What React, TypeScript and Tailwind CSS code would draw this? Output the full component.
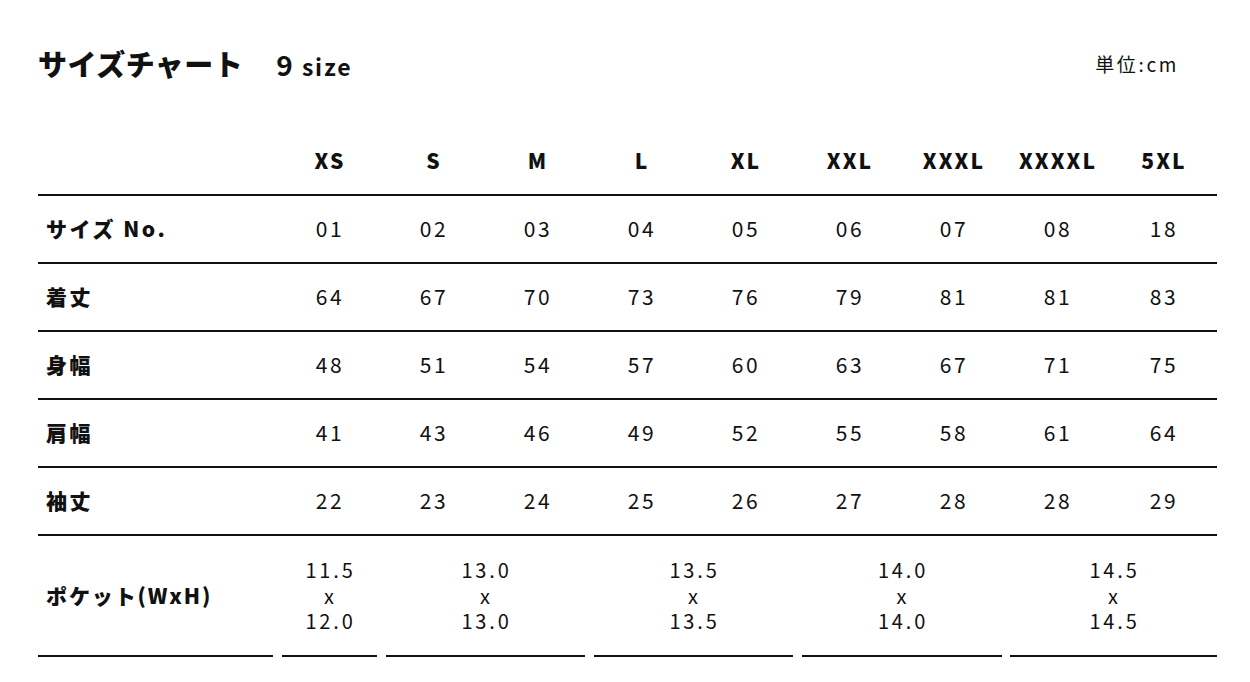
import React from "react";

const sizes = ["XS", "S", "M", "L", "XL", "XXL", "XXXL", "XXXXL", "5XL"];

const rows: { label: string; values: string[] }[] = [
  { label: "サイズ No.", values: ["01", "02", "03", "04", "05", "06", "07", "08", "18"] },
  { label: "着丈", values: ["64", "67", "70", "73", "76", "79", "81", "81", "83"] },
  { label: "身幅", values: ["48", "51", "54", "57", "60", "63", "67", "71", "75"] },
  { label: "肩幅", values: ["41", "43", "46", "49", "52", "55", "58", "61", "64"] },
  { label: "袖丈", values: ["22", "23", "24", "25", "26", "27", "28", "28", "29"] },
];

const pockets = [
  { w: "11.5", h: "12.0", span: "col-span-1", edge: "ml-[5px] mr-[4px]" },
  { w: "13.0", h: "13.0", span: "col-span-2", edge: "ml-[5px] mr-[4px]" },
  { w: "13.5", h: "13.5", span: "col-span-2", edge: "ml-[5px] mr-[4px]" },
  { w: "14.0", h: "14.0", span: "col-span-2", edge: "ml-[5px] mr-[3px]" },
  { w: "14.5", h: "14.5", span: "col-span-2", edge: "ml-[5px] mr-0" },
];

const grid = "grid grid-cols-[239px_repeat(8,104px)_108px]";

export default function App() {
  return (
    <div
      className="w-[1250px] h-[682px] bg-white pl-[38px] pr-[33px] text-[#111]"
      style={{ fontFamily: '"Noto Sans CJK JP", "Noto Sans", sans-serif' }}
    >
      {/* title */}
      <div className="h-[128px] flex items-center justify-between">
        <div className="flex items-baseline">
          <span className="text-[29px] font-black tracking-[0.5px]">サイズチャート</span>
          <span className="ml-[33px] text-[28px] font-bold">9</span>
          <span className="ml-[9px] text-[23px] font-bold tracking-[0.08em]">size</span>
        </div>
        <div className="text-[19px] tracking-[0.14em] mr-[38px]">単位:cm</div>
      </div>

      {/* size header */}
      <div className={`${grid} h-[68px] border-b-2 border-[#111] items-center`}>
        <div></div>
        {sizes.map((s) => (
          <div key={s} className="text-center text-[21px] font-extrabold tracking-[0.1em] pl-[2px]">
            {s}
          </div>
        ))}
      </div>

      {rows.map((r) => (
        <div key={r.label} className={`${grid} h-[68px] border-b-2 border-[#111] items-center`}>
          <div className="pl-[8px] text-[21px] font-black tracking-[0.12em]">{r.label}</div>
          {r.values.map((v, i) => (
            <div key={i} className="text-center text-[21px] tracking-[0.12em] pl-[2px]">
              {v}
            </div>
          ))}
        </div>
      ))}

      {/* pocket row */}
      <div className={`${grid} -mt-[2px]`}>
        <div className="mr-[4px] border-y-2 border-[#111] h-[123px] flex items-center pl-[8px] text-[21px] font-black tracking-[0.09em]">
          ポケット(WxH)
        </div>
        {pockets.map((p, i) => (
          <div
            key={i}
            className={`${p.span} ${p.edge} border-y-2 border-[#111] h-[123px] flex items-center justify-center pl-[2px]`}
          >
            <p className="text-center whitespace-pre-line text-[20px] leading-[25.5px] tracking-[0.14em]">
              {`${p.w}\nx\n${p.h}`}
            </p>
          </div>
        ))}
      </div>
    </div>
  );
}
